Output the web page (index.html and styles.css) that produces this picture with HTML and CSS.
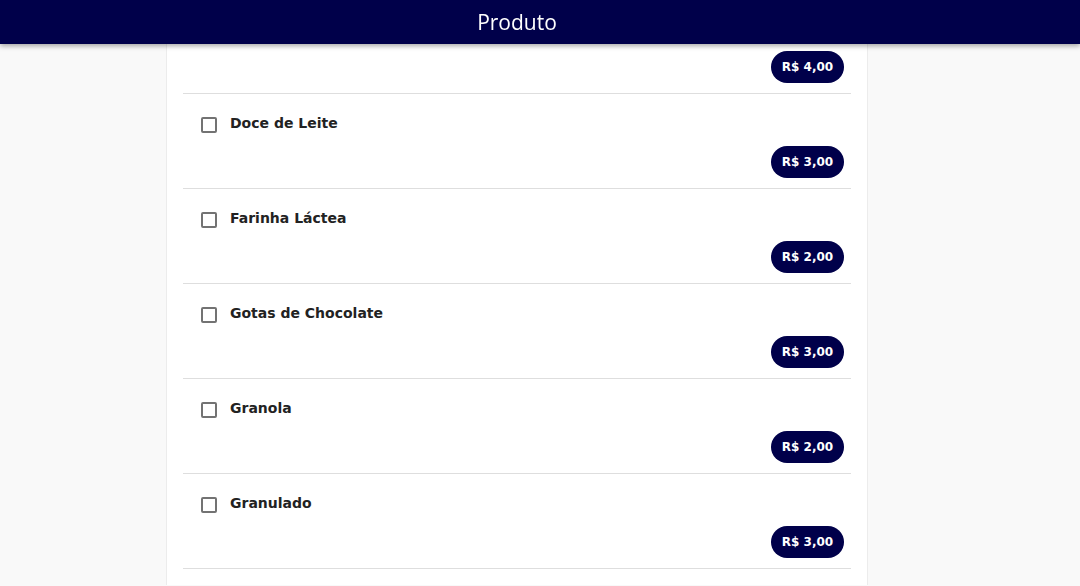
FILE: index.html
```html
<!DOCTYPE html>
<html lang="pt-BR">
<head>
<meta charset="utf-8">
<title>Produto</title>
<link rel="stylesheet" href="styles.css">
</head>
<body>
<header class="topbar">
  <div class="topbar-inner"><h1 class="title">Produto</h1></div>
</header>
<div class="page">
  <main class="column">
    <ul class="list">
      <li class="item">
        <div class="item-head"><span class="check"></span><span class="name">Chocolate</span></div>
        <div class="item-foot"><span class="price">R$ 4,00</span></div>
      </li>
      <li class="item">
        <div class="item-head"><span class="check"></span><span class="name">Doce de Leite</span></div>
        <div class="item-foot"><span class="price">R$ 3,00</span></div>
      </li>
      <li class="item">
        <div class="item-head"><span class="check"></span><span class="name">Farinha Láctea</span></div>
        <div class="item-foot"><span class="price">R$ 2,00</span></div>
      </li>
      <li class="item">
        <div class="item-head"><span class="check"></span><span class="name">Gotas de Chocolate</span></div>
        <div class="item-foot"><span class="price">R$ 3,00</span></div>
      </li>
      <li class="item">
        <div class="item-head"><span class="check"></span><span class="name">Granola</span></div>
        <div class="item-foot"><span class="price">R$ 2,00</span></div>
      </li>
      <li class="item">
        <div class="item-head"><span class="check"></span><span class="name">Granulado</span></div>
        <div class="item-foot"><span class="price">R$ 3,00</span></div>
      </li>
    </ul>
  </main>
</div>
</body>
</html>
```

FILE: styles.css
```css
* { box-sizing: border-box; }
html, body { margin: 0; padding: 0; }
body {
  background: #f9f9f9;
  font-family: "DejaVu Sans", Verdana, sans-serif;
  overflow: hidden;
}
.topbar {
  position: fixed;
  top: 0; left: 0; right: 0;
  height: 44px;
  background: #00004a;
  box-shadow: 0 2px 5px rgba(0,0,0,0.35);
  z-index: 10;
}
.topbar-inner {
  width: 1034px;
  height: 44px;
  display: flex;
  align-items: center;
  justify-content: center;
}
.title {
  margin: 0;
  color: #fff;
  font-family: "Open Sans", sans-serif;
  font-weight: 500;
  font-size: 21px;
}
.page {
  width: 1034px;
  display: flex;
  justify-content: center;
}
.column {
  width: 702px;
  min-height: 586px;
  background: #fff;
  border-left: 1px solid #ececec;
  border-right: 1px solid #ececec;
  padding: 0 16px;
  margin-top: -1px;
}
.list { list-style: none; margin: 0; padding: 0; }
.item {
  height: 95px;
  border-bottom: 1px solid #dedede;
  padding: 23px 7px 0 18px;
  display: flex;
  flex-direction: column;
}
.item-head {
  display: flex;
  align-items: center;
  height: 16px;
}
.check {
  width: 16px; height: 16px;
  border: 2px solid #737373;
  border-radius: 2px;
  background: #fff;
  flex: none;
}
.name {
  margin-left: 13px;
  font-weight: 700;
  font-size: 14px;
  color: #222;
  line-height: 16px;
  margin-top: -5px;
}
.item-foot {
  display: flex;
  justify-content: flex-end;
  margin-top: 13px;
}
.price {
  height: 32px;
  width: 73px;
  border-radius: 16px;
  background: #00004a;
  color: #fff;
  font-weight: 700;
  font-size: 12px;
  display: flex;
  align-items: center;
  justify-content: center;
}
```
